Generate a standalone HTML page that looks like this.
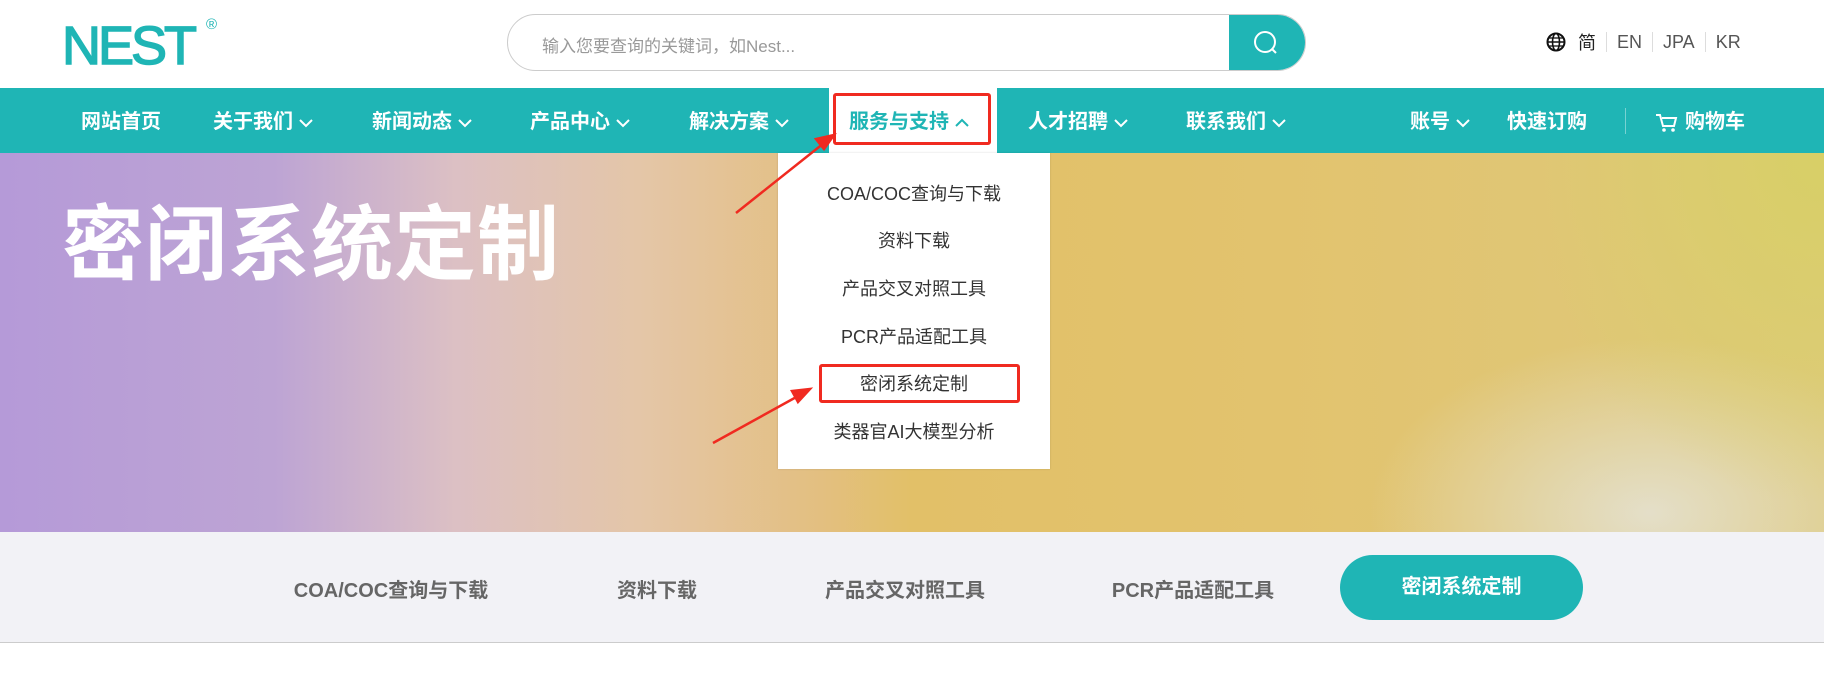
<!DOCTYPE html>
<html><head><meta charset="utf-8"><style>
*{margin:0;padding:0;box-sizing:border-box}
body{width:1824px;height:687px;overflow:hidden;background:#fff;font-family:"Liberation Sans","Noto Sans CJK SC",sans-serif;position:relative}
.abs{position:absolute}
.logo{left:62px;top:19px;font-size:54px;font-weight:normal;color:#1fb5b5;letter-spacing:-3px;font-family:"Liberation Sans",sans-serif;line-height:54px;transform:scaleX(1.0);transform-origin:left;-webkit-text-stroke:1.5px #1fb5b5}
.reg{left:206px;top:16px;font-size:15px;color:#1fb5b5}
.search{left:507px;top:14px;width:799px;height:57px;border:1px solid #ccc;border-radius:29px;overflow:hidden}
.search span{position:absolute;left:34px;top:17px;font-size:17px;color:#999}
.search .btn{position:absolute;right:0;top:0;width:76px;height:57px;background:#1fb5b5}
.lang{left:1546px;top:29px;font-size:18px;color:#555;display:flex;align-items:center}
.lang i{display:inline-block;width:1px;height:20px;background:#ddd;margin:0 10px}
.nav{left:0;top:88px;width:1824px;height:65px;background:#1fb5b5}
.ni{position:absolute;top:17px;font-size:20px;font-weight:bold;color:#fff;white-space:nowrap}
.ni svg{vertical-align:middle;margin-left:6px}
.hero{left:0;top:153px;width:1824px;height:379px;background:
radial-gradient(ellipse 420px 500px at 1820px 0px,rgba(215,208,100,.9),transparent 70%),
radial-gradient(ellipse 400px 250px at 1650px 360px,rgba(228,224,205,.95),transparent 70%),
linear-gradient(90deg,#b59ad8 0%,#bda4d4 15%,#dcc0c4 25%,#e4c6a8 35%,#e3bf80 45%,#e2c068 50%,#e2c36e 70%,#dec97c 100%)}
.title{left:62px;top:178px;font-size:82px;font-weight:bold;color:#fff;letter-spacing:1px}
.dd{left:778px;top:153px;width:272px;height:316px;background:#fff;box-shadow:0 0 2px rgba(0,0,0,.15)}
.dd div{position:absolute;left:0;width:272px;text-align:center;font-size:18px;color:#333}
.tabs{left:0;top:532px;width:1824px;height:111px;background:#f2f2f6;border-bottom:1px solid #ccc}
.t{position:absolute;top:42px;font-size:20px;font-weight:bold;color:#666;transform:translateX(-50%);white-space:nowrap}
.tb{left:1340px;top:23px;width:243px;height:65px;border-radius:33px;background:#1fb5b5;color:#fff;font-size:20px;font-weight:bold;text-align:center;line-height:65px;position:absolute}
.red{border:3px solid #f02a20;border-radius:3px}
</style></head><body>
<div class="abs logo">NEST</div><div class="abs reg">®</div>
<div class="abs search"><span>输入您要查询的关键词，如Nest...</span><div class="btn"><svg width="76" height="57"><circle cx="36" cy="27" r="10" fill="none" stroke="#fff" stroke-width="2"/><line x1="43" y1="34" x2="47" y2="38" stroke="#fff" stroke-width="2"/></svg></div></div>
<div class="abs lang"><svg width="20" height="20" viewBox="0 0 20 20"><circle cx="10" cy="10" r="8.5" fill="none" stroke="#111" stroke-width="2"/><ellipse cx="10" cy="10" rx="3.5" ry="8.5" fill="none" stroke="#111" stroke-width="1.6"/><line x1="1.5" y1="10" x2="18.5" y2="10" stroke="#111" stroke-width="1.6"/><line x1="3" y1="6" x2="17" y2="6" stroke="#111" stroke-width="1.3"/><line x1="3" y1="14" x2="17" y2="14" stroke="#111" stroke-width="1.3"/></svg><span style="margin-left:12px;color:#222">简</span><i></i>EN<i></i>JPA<i></i>KR</div>
<div class="abs nav">
<div class="ni" style="left:81px">网站首页</div>
<div class="ni" style="left:213px">关于我们<svg width="14" height="10"><path d="M1 2l6 6 6-6" fill="none" stroke="#fff" stroke-width="2"/></svg></div>
<div class="ni" style="left:372px">新闻动态<svg width="14" height="10"><path d="M1 2l6 6 6-6" fill="none" stroke="#fff" stroke-width="2"/></svg></div>
<div class="ni" style="left:530px">产品中心<svg width="14" height="10"><path d="M1 2l6 6 6-6" fill="none" stroke="#fff" stroke-width="2"/></svg></div>
<div class="ni" style="left:689px">解决方案<svg width="14" height="10"><path d="M1 2l6 6 6-6" fill="none" stroke="#fff" stroke-width="2"/></svg></div>
<div style="position:absolute;left:829px;top:0;width:168px;height:65px;background:#fff"></div>
<div class="ni" style="left:849px;color:#1fb5b5">服务与支持<svg width="14" height="10"><path d="M1 8l6-6 6 6" fill="none" stroke="#1fb5b5" stroke-width="2"/></svg></div>
<div class="ni" style="left:1028px">人才招聘<svg width="14" height="10"><path d="M1 2l6 6 6-6" fill="none" stroke="#fff" stroke-width="2"/></svg></div>
<div class="ni" style="left:1186px">联系我们<svg width="14" height="10"><path d="M1 2l6 6 6-6" fill="none" stroke="#fff" stroke-width="2"/></svg></div>
<div class="ni" style="left:1410px">账号<svg width="14" height="10"><path d="M1 2l6 6 6-6" fill="none" stroke="#fff" stroke-width="2"/></svg></div>
<div class="ni" style="left:1507px">快速订购</div>
<div style="position:absolute;left:1625px;top:20px;width:1px;height:26px;background:rgba(255,255,255,.4)"></div>
<div class="ni" style="left:1655px"><svg width="24" height="22" style="margin:0 6px 0 0"><path d="M1 3h4l3 11h11l2-8H7" fill="none" stroke="#fff" stroke-width="2"/><circle cx="9" cy="18" r="1.8" fill="#fff"/><circle cx="18" cy="18" r="1.8" fill="#fff"/></svg>购物车</div>
</div>
<div class="abs hero"></div>
<div class="abs title">密闭系统定制</div>
<div class="abs dd">
<div style="top:27px">COA/COC查询与下载</div>
<div style="top:74px">资料下载</div>
<div style="top:122px">产品交叉对照工具</div>
<div style="top:170px">PCR产品适配工具</div>
<div style="top:217px">密闭系统定制</div>
<div style="top:265px">类器官AI大模型分析</div>
</div>
<div class="abs red" style="left:833px;top:93px;width:158px;height:52px"></div>
<div class="abs red" style="left:819px;top:364px;width:201px;height:39px"></div>
<svg class="abs" style="left:0;top:0" width="1824" height="687"><g stroke="#f02a20" stroke-width="2.5" fill="#f02a20"><line x1="736" y1="213" x2="824" y2="143"/><path d="M834 135l-18 4 8 10z"/><line x1="713" y1="443" x2="800" y2="395"/><path d="M810 389l-18 2 6 11z"/></g></svg>
<div class="abs tabs">
<div class="t" style="left:391px">COA/COC查询与下载</div>
<div class="t" style="left:657px">资料下载</div>
<div class="t" style="left:905px">产品交叉对照工具</div>
<div class="t" style="left:1193px">PCR产品适配工具</div>
<div class="tb">密闭系统定制</div>
</div>
</body></html>
